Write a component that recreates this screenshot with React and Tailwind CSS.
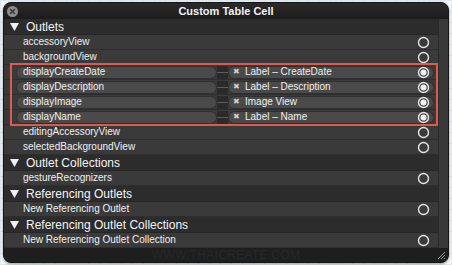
import React from 'react'

const font = { fontFamily: '"Liberation Sans", Arial, sans-serif' }

const Circle = ({ filled }) => (
  <svg width="13" height="13" viewBox="0 0 13 13" className="shrink-0">
    <circle cx="6.5" cy="6.5" r="5" fill="none" stroke="#e4e4e4" strokeWidth="1.4" />
    {filled && <circle cx="6.5" cy="6.5" r="3" fill="#f2f2f2" />}
  </svg>
)

const Header = ({ label }) => (
  <div className="h-[16px] flex items-center bg-[#2c2c2c] border-b border-[#262626]">
    <svg width="9" height="8" viewBox="0 0 9 8" className="ml-[6px] mr-[7px]">
      <path d="M0 0 L9 0 L4.5 8 Z" fill="#f0f0f0" />
    </svg>
    <span className="text-[12px] leading-none text-[#f4f4f4]">{label}</span>
  </div>
)

const Item = ({ label, circle = true }) => (
  <div className="h-[15px] flex items-center bg-[#3a3a3a] border-b border-[#2e2e2e] pl-[19px] pr-[8px]">
    <span className="flex-1 text-[10px] leading-none text-[#f0f0f0]">{label}</span>
    {circle && <Circle />}
  </div>
)

const Linked = ({ label, target }) => (
  <div className="h-[15px] flex items-center bg-[#3a3a3a] border-b border-[#2e2e2e] pl-[12px] pr-[4px]">
    <div className="w-[201px] h-[13px] rounded-full bg-[#4a4a4a] border border-[#2f2f2f] flex items-center pl-[6px]">
      <span className="text-[10px] leading-none text-[#f0f0f0]">{label}</span>
    </div>
    <div className="w-[11px] h-[13px] bg-[#2a2a2a] flex items-center">
      <div className="w-full h-px bg-[#5c5c5c]" />
    </div>
    <div className="flex-1 h-[13px] rounded-full bg-[#4a4a4a] border border-[#2f2f2f] flex items-center pl-[4px] pr-[3px]">
      <span className="text-[8px] leading-none text-[#cfcfcf] w-[12px]">✖</span>
      <span className="flex-1 text-[10px] leading-none text-[#f0f0f0]">{target}</span>
      <Circle filled />
    </div>
  </div>
)

export default function App() {
  return (
    <div
      style={font}
      className="w-[452px] h-[265px] bg-[#f7f9fb] bg-[linear-gradient(to_right,#dfe7ef_1px,transparent_1px),linear-gradient(to_bottom,#dfe7ef_1px,transparent_1px)] bg-[size:11px_11px] pl-[3px] pt-[2px]"
    >
      <div className="w-[446px] h-[261px] rounded-[8px] overflow-hidden border border-[#151515] bg-[#1e1e1e] flex flex-col shadow-[0_1px_3px_rgba(0,0,0,0.4)]">
        {/* title bar */}
        <div className="h-[17px] relative flex items-center justify-center bg-[linear-gradient(#2a2a2a,#1c1c1c)]">
          <div className="absolute left-[3px] top-[3px] w-[11px] h-[11px] rounded-full bg-[#8e8e8e] flex items-center justify-center">
            <svg width="7" height="7" viewBox="0 0 7 7">
              <path d="M1 1 L6 6 M6 1 L1 6" stroke="#3a3a3a" strokeWidth="1.6" />
            </svg>
          </div>
          <span className="text-[11px] font-bold text-[#f2f2f2] leading-none">Custom Table Cell</span>
        </div>

        {/* body */}
        <div className="flex flex-1">
          <div className="w-[434px] flex flex-col">
            <Header label="Outlets" />
            <Item label="accessoryView" />
            <Item label="backgroundView" />
            <div className="relative">
              <Linked label="displayCreateDate" target="Label – CreateDate" />
              <Linked label="displayDescription" target="Label – Description" />
              <Linked label="displayImage" target="Image View" />
              <Linked label="displayName" target="Label – Name" />
              <div className="absolute left-[6px] right-[0px] top-[-2px] bottom-[-1px] border-2 border-[#dc5a4e] pointer-events-none" />
            </div>
            <Item label="editingAccessoryView" />
            <Item label="selectedBackgroundView" />
            <Header label="Outlet Collections" />
            <Item label="gestureRecognizers" />
            <Header label="Referencing Outlets" />
            <Item label="New Referencing Outlet" />
            <Header label="Referencing Outlet Collections" />
            <Item label="New Referencing Outlet Collection" />
          </div>
          <div className="w-[10px] bg-[#393939] border-l border-[#2a2a2a]" />
        </div>

        {/* bottom bar */}
        <div className="h-[14px] relative flex items-center justify-center bg-[#1e1e1e]">
          <span className="text-[12px] tracking-wide text-[#282828] leading-none">WWW.THAICREATE.COM</span>
          <svg width="9" height="9" viewBox="0 0 9 9" className="absolute right-[2px] bottom-[2px]">
            <path d="M1 8 L8 1 M4 8 L8 4 M7 8 L8 7" stroke="#9a9a9a" strokeWidth="1" />
          </svg>
        </div>
      </div>
    </div>
  )
}
